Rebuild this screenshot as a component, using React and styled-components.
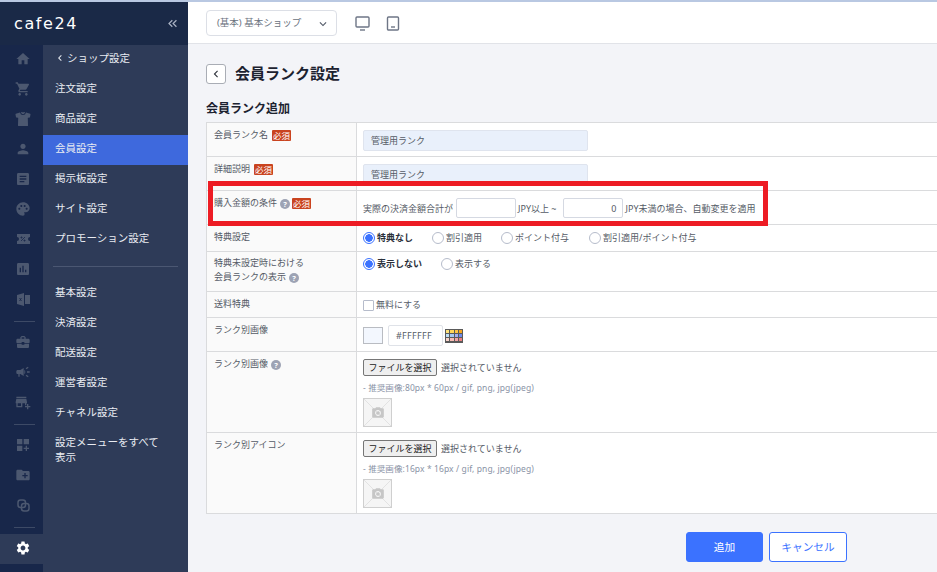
import React from 'react'
import styled, { createGlobalStyle } from 'styled-components'
import {
    MdHome, MdShoppingCart, MdPerson, MdArticle, MdPalette, MdAssessment, MdBusinessCenter,
    MdCampaign, MdAddBusiness, MdDashboardCustomize, MdCreateNewFolder, MdSettings,
    MdKeyboardDoubleArrowLeft, MdChevronLeft, MdKeyboardArrowDown, MdPhotoCamera,
} from 'react-icons/md'
import { IoShirt } from 'react-icons/io5'

const GlobalStyle = createGlobalStyle`
    html, body {
        margin: 0;
        height: 100%;
        overflow: hidden;
        font-family: "Noto Sans", "Noto Sans CJK JP", sans-serif;
    }
    * {
        box-sizing: border-box;
    }
`

const Page = styled.div`
    width: 937px;
    height: 572px;
    display: flex;
    border-top: 2px solid #b9c8e2;
    overflow: hidden;
`

const Sidebar = styled.aside`
    width: 188px;
    flex: none;
    display: flex;
    flex-direction: column;
    background: #18274a;
`

const LogoBar = styled.div`
    height: 43px;
    flex: none;
    display: flex;
    align-items: center;
    justify-content: space-between;
    padding: 0 8px 0 14px;
    background: #1a2947;
    color: #ffffff;
`

const Logo = styled.span`
    font-family: "DejaVu Sans", sans-serif;
    font-size: 16px;
    letter-spacing: 1.6px;
    line-height: 1;
`

const Collapse = styled.span`
    display: flex;
    color: #a9b1c2;
    font-size: 15px;
`

const SideBody = styled.div`
    flex: 1;
    display: flex;
`

const Rail = styled.nav`
    width: 43px;
    flex: none;
    display: flex;
    flex-direction: column;
    background: #18274a;
`

const RailItem = styled.div`
    height: 30px;
    display: flex;
    align-items: center;
    justify-content: center;
    padding: 0 0 2px 3px;
    font-size: 16px;
    color: ${p => (p.$active ? '#ffffff' : '#4c5870')};
    background: ${p => (p.$active ? '#2e3b58' : 'transparent')};
`

const RailDivider = styled.div`
    height: 1px;
    margin: 6px 8px 6px 14px;
    background: #3d4a66;
`

const Panel = styled.nav`
    flex: 1;
    background: #2e3b58;
`

const MenuItem = styled.div`
    min-height: 30px;
    display: flex;
    align-items: center;
    padding: ${p => (p.$multi ? '6px' : '0 7px 4px')} 12px;
    font-size: 10.5px;
    line-height: 15px;
    color: #e9ecf2;
    background: ${p => (p.$active ? '#3e69dd' : 'transparent')};
`

const BackMark = styled.span`
    display: flex;
    margin: 0 1px 0 -1px;
    font-size: 12px;
`

const MenuDivider = styled.div`
    height: 1px;
    margin: 11px 10px 12px;
    background: #4b5772;
`

const Main = styled.main`
    flex: 1;
    min-width: 0;
    display: flex;
    flex-direction: column;
    background: #f3f4f8;
`

const TopBar = styled.header`
    height: 42px;
    flex: none;
    display: flex;
    align-items: flex-start;
    padding: 8px 18px;
    background: #ffffff;
    border-bottom: 1px solid #e1e3e8;
`

const ShopSelect = styled.div`
    width: 131px;
    height: 26px;
    display: flex;
    align-items: center;
    justify-content: space-between;
    padding: 0 6px 3px 10px;
    border: 1px solid #dcdfe6;
    border-radius: 4px;
    font-size: 9.5px;
    color: #6b7280;
`

const Arrow = styled.span`
    display: flex;
    margin-top: 4px;
    font-size: 14px;
    color: #555c6a;
`

const DeviceIcon = styled.svg`
    margin: 6px 0 0 ${p => p.$gap}px;
    flex: none;
`

const Content = styled.div`
    flex: 1;
    min-height: 0;
    padding: 20px 0 0 18px;
    overflow: hidden;
    position: relative;
`

const TitleRow = styled.div`
    height: 20px;
    display: flex;
    align-items: center;
    gap: 9px;
`

const BackButton = styled.button`
    width: 20px;
    height: 20px;
    display: flex;
    align-items: center;
    justify-content: center;
    padding: 0;
    background: #ffffff;
    border: 1px solid #a9adb5;
    border-radius: 3px;
    color: #333840;
    font-size: 14px;
`

const Title = styled.h1`
    margin: 0 0 2px;
    font-size: 15px;
    line-height: 20px;
    font-weight: 700;
    color: #1c2230;
`

const SectionTitle = styled.h2`
    margin: 14px 0 6px;
    padding-top: 2px;
    height: 18px;
    font-size: 12px;
    line-height: 18px;
    font-weight: 700;
    color: #1c2230;
`

const FormTable = styled.div`
    width: 780px;
    border-top: 1px solid #dadbdd;
    border-left: 1px solid #dadbdd;
`

const Row = styled.div`
    height: ${p => p.$height}px;
    display: flex;
    border-bottom: 1px solid #dadbdd;
    background: #ffffff;
`

const LabelCell = styled.div`
    width: 150px;
    flex: none;
    padding: ${p => p.$top ?? 5}px 7px 0;
    background: #fafafa;
    border-right: 1px solid #dadbdd;
    font-size: 9px;
    line-height: 14px;
    color: #555b66;
`

const ValueCell = styled.div`
    flex: 1;
    padding: ${p => p.$top ?? 7}px 6px 0;
    font-size: 9px;
    line-height: 15px;
    color: #555b66;
`

const Line = styled.div`
    display: flex;
    align-items: center;
`

const Help = styled.span`
    display: inline-block;
    width: 10px;
    height: 10px;
    margin-left: 3px;
    border-radius: 50%;
    background: #9da3b4;
    color: #ffffff;
    font-size: 7.5px;
    line-height: 10px;
    font-weight: 700;
    text-align: center;
    vertical-align: middle;
`

const Required = styled.span`
    display: inline-block;
    margin-left: 4px;
    padding: 0 1px;
    height: 11px;
    line-height: 11px;
    background: #c9431f;
    border-radius: 1px;
    color: #ffffff;
    font-size: 8.5px;
    vertical-align: middle;

    ${Help} + & {
        margin-left: 2px;
    }
`

const FilledInput = styled.div`
    width: 225px;
    height: 21px;
    padding: 0 7px;
    display: flex;
    align-items: center;
    background: #e9f0fb;
    border: 1px solid #dfe4ee;
    border-radius: 2px;
`

const AmountInput = styled.div`
    width: 60px;
    height: 20px;
    margin: 0 ${p => p.$right ?? 2}px 0 ${p => p.$left ?? 3}px;
    padding: 0 5px;
    display: flex;
    align-items: center;
    justify-content: flex-end;
    background: #ffffff;
    border: 1px solid #d5d9e2;
    border-radius: 2px;
`

const Radio = styled.span`
    width: 12px;
    height: 12px;
    flex: none;
    margin-right: 2px;
    border: 1px solid ${p => (p.$on ? '#3b72ff' : '#b6bccb')};
    border-radius: 50%;
    background: ${p => (p.$on ? 'radial-gradient(circle, #3b72ff 0 3.5px, #ffffff 4px)' : '#ffffff')};
`

const RadioText = styled.span`
    margin-right: ${p => p.$gap}px;
    font-weight: ${p => (p.$on ? 700 : 400)};
    color: ${p => (p.$on ? '#2a2f3a' : '#555b66')};
`

const Check = styled.span`
    width: 11px;
    height: 11px;
    margin: 1px 2px 0 0;
    background: #ffffff;
    border: 1px solid #b6bccb;
    border-radius: 1px;
`

const Swatch = styled.span`
    width: 20px;
    height: 17px;
    margin-right: 5px;
    background: #f3f7fe;
    border: 1px solid #b9bcc2;
`

const ColorInput = styled.div`
    width: 55px;
    height: 21px;
    display: flex;
    align-items: center;
    padding-left: 7px;
    background: #ffffff;
    border: 1px solid #dfe2e8;
    border-radius: 2px;
    letter-spacing: 0.3px;
`

const Palette = styled.div`
    width: 18px;
    height: 14px;
    margin-left: 2px;
    display: grid;
    grid-template-columns: repeat(4, 1fr);
    grid-template-rows: repeat(3, 1fr);
    gap: 1px;
    padding: 1px;
    background: #5a5a5a;
`

const PaletteCell = styled.span`
    background: ${p => p.$color};
`

const FileButton = styled.button`
    width: 74px;
    height: 17px;
    margin-right: 4px;
    padding: 0;
    background: #efefef;
    border: 1px solid #767676;
    border-radius: 2px;
    font-family: inherit;
    font-size: 9px;
    color: #222222;
`

const Hint = styled.div`
    margin-top: 6px;
    font-size: 8.5px;
    line-height: 12px;
    letter-spacing: 0.1px;
    color: #8a93a6;
    white-space: nowrap;
`

const Placeholder = styled.div`
    width: 29px;
    height: 29px;
    margin-top: 4px;
    display: flex;
    align-items: center;
    justify-content: center;
    background: linear-gradient(45deg, transparent 49%, #e2e2e2 49% 51%, transparent 51%),
        linear-gradient(-45deg, transparent 49%, #e2e2e2 49% 51%, transparent 51%),
        #f5f5f5;
    border: 1px solid #cfcfcf;
    color: #c6c6c6;
    font-size: 14px;
`

const Actions = styled.div`
    display: flex;
    gap: 6px;
    margin: 18px 0 0 480px;
`

const ActionButton = styled.button`
    width: ${p => (p.$primary ? 77 : 78)}px;
    height: 30px;
    padding: 0 0 2px;
    background: ${p => (p.$primary ? '#3b72ff' : '#ffffff')};
    border: 1px solid #3b72ff;
    border-radius: 3px;
    color: ${p => (p.$primary ? '#ffffff' : '#3b72ff')};
    font-family: inherit;
    font-size: 10.7px;
`

const Highlight = styled.div`
    position: absolute;
    left: 20px;
    top: 137px;
    width: 560px;
    height: 45px;
    border: 5px solid #ed1c24;
    pointer-events: none;
`

function TicketIcon() {
    return (
        <svg width="13" height="10" viewBox="0 0 13 10" fill="currentColor">
            <path d="M0 0h13v3a2 2 0 0 0 0 4v3H0V7a2 2 0 0 0 0-4z" />
            <path d="M4 7l4-4M4 3h1v1H4zM7 6h1v1H7z" stroke="#18274a" strokeWidth=".8" fill="none" />
        </svg>
    )
}

function BookIcon() {
    return (
        <svg width="13" height="13" viewBox="0 0 13 13" fill="currentColor">
            <path d="M0 2l7-2v13l-7-2z" />
            <path d="M8 2h5v9H8z" />
            <path d="M2.5 5l2 3M4.5 5l-2 3" stroke="#18274a" strokeWidth=".8" fill="none" />
        </svg>
    )
}

function LinkIcon() {
    return (
        <svg width="13" height="13" viewBox="0 0 13 13" fill="none" stroke="currentColor" strokeWidth="1.5">
            <rect x="1" y="1" width="7.5" height="7.5" rx="2.5" />
            <rect x="4.5" y="4.5" width="7.5" height="7.5" rx="2.5" />
        </svg>
    )
}

const paletteColors = ['#ffe27a', '#ffd65a', '#ffc542', '#f5a623', '#bfe0f7', '#a5c8f2', '#a3adf2', '#6f8cec', '#f9d3ca', '#f7bcb4', '#f4a3a3', '#ee8080']

function FileField({ size }) {
    return (
        <>
            <Line>
                <FileButton>ファイルを選択</FileButton>
                選択されていません
            </Line>
            <Hint>- 推奨画像:{ size } / gif, png, jpg(jpeg)</Hint>
            <Placeholder><MdPhotoCamera /></Placeholder>
        </>
    )
}

function Nav() {
    const upper = ['注文設定', '商品設定', '会員設定', '掲示板設定', 'サイト設定', 'プロモーション設定']
    const lower = ['基本設定', '決済設定', '配送設定', '運営者設定', 'チャネル設定']
    return (
        <Sidebar>
            <LogoBar>
                <Logo>cafe24</Logo>
                <Collapse><MdKeyboardDoubleArrowLeft /></Collapse>
            </LogoBar>
            <SideBody>
                <Rail>
                    <RailItem><MdHome /></RailItem>
                    <RailItem><MdShoppingCart /></RailItem>
                    <RailItem><IoShirt /></RailItem>
                    <RailItem><MdPerson /></RailItem>
                    <RailItem><MdArticle /></RailItem>
                    <RailItem><MdPalette /></RailItem>
                    <RailItem><TicketIcon /></RailItem>
                    <RailItem><MdAssessment /></RailItem>
                    <RailItem><BookIcon /></RailItem>
                    <RailDivider />
                    <RailItem><MdBusinessCenter /></RailItem>
                    <RailItem><MdCampaign /></RailItem>
                    <RailItem><MdAddBusiness /></RailItem>
                    <RailDivider />
                    <RailItem><MdDashboardCustomize /></RailItem>
                    <RailItem><MdCreateNewFolder /></RailItem>
                    <RailItem><LinkIcon /></RailItem>
                    <RailDivider />
                    <RailItem $active><MdSettings /></RailItem>
                </Rail>
                <Panel>
                    <MenuItem><BackMark><MdChevronLeft /></BackMark>ショップ設定</MenuItem>
                    { upper.map(name => <MenuItem key={ name } $active={ name === '会員設定' }>{ name }</MenuItem>) }
                    <MenuDivider />
                    { lower.map(name => <MenuItem key={ name }>{ name }</MenuItem>) }
                    <MenuItem $multi>設定メニューをすべて<br />表示</MenuItem>
                </Panel>
            </SideBody>
        </Sidebar>
    )
}

export default function App() {
    return (
        <Page>
            <GlobalStyle />
            <Nav />
            <Main>
                <TopBar>
                    <ShopSelect>
                        (基本) 基本ショップ
                        <Arrow><MdKeyboardArrowDown /></Arrow>
                    </ShopSelect>
                    <DeviceIcon $gap={ 18 } width="15" height="15" viewBox="0 0 15 15" fill="none" stroke="#6e7686" strokeWidth="1.4">
                        <rect x="1" y="1" width="13" height="10" rx="1" />
                        <path d="M5 14h5" />
                    </DeviceIcon>
                    <DeviceIcon $gap={ 16 } width="14" height="15" viewBox="0 0 14 15" fill="none" stroke="#6e7686" strokeWidth="1.4">
                        <rect x="1.5" y="1" width="11" height="13" rx="1" />
                        <path d="M5 11h4" />
                    </DeviceIcon>
                </TopBar>
                <Content>
                    <TitleRow>
                        <BackButton><MdChevronLeft /></BackButton>
                        <Title>会員ランク設定</Title>
                    </TitleRow>
                    <SectionTitle>会員ランク追加</SectionTitle>
                    <FormTable>
                        <Row $height={ 34 }>
                            <LabelCell>会員ランク名<Required>必須</Required></LabelCell>
                            <ValueCell><FilledInput>管理用ランク</FilledInput></ValueCell>
                        </Row>
                        <Row $height={ 34 }>
                            <LabelCell>詳細説明<Required>必須</Required></LabelCell>
                            <ValueCell><FilledInput>管理用ランク</FilledInput></ValueCell>
                        </Row>
                        <Row $height={ 34 }>
                            <LabelCell>購入金額の条件<Help>?</Help><Required>必須</Required></LabelCell>
                            <ValueCell>
                                <Line>
                                    実際の決済金額合計が
                                    <AmountInput />
                                    JPY以上 ~
                                    <AmountInput $left={ 6 } $right={ 3 }>0</AmountInput>
                                    JPY未満の場合、自動変更を適用
                                </Line>
                            </ValueCell>
                        </Row>
                        <Row $height={ 27 }>
                            <LabelCell>特典設定</LabelCell>
                            <ValueCell $top={ 5 }>
                                <Line>
                                    <Radio $on /><RadioText $on $gap={ 19 }>特典なし</RadioText>
                                    <Radio /><RadioText $gap={ 19 }>割引適用</RadioText>
                                    <Radio /><RadioText $gap={ 20 }>ポイント付与</RadioText>
                                    <Radio /><RadioText>割引適用/ポイント付与</RadioText>
                                </Line>
                            </ValueCell>
                        </Row>
                        <Row $height={ 40 }>
                            <LabelCell $top={ 4 }>特典未設定時における<br />会員ランクの表示<Help>?</Help></LabelCell>
                            <ValueCell $top={ 4 }>
                                <Line>
                                    <Radio $on /><RadioText $on $gap={ 19 }>表示しない</RadioText>
                                    <Radio /><RadioText>表示する</RadioText>
                                </Line>
                            </ValueCell>
                        </Row>
                        <Row $height={ 26 }>
                            <LabelCell>送料特典</LabelCell>
                            <ValueCell $top={ 5 }>
                                <Line><Check />無料にする</Line>
                            </ValueCell>
                        </Row>
                        <Row $height={ 34 }>
                            <LabelCell>ランク別画像</LabelCell>
                            <ValueCell>
                                <Line>
                                    <Swatch />
                                    <ColorInput>#FFFFFF</ColorInput>
                                    <Palette>
                                        { paletteColors.map(color => <PaletteCell key={ color } $color={ color } />) }
                                    </Palette>
                                </Line>
                            </ValueCell>
                        </Row>
                        <Row $height={ 81 }>
                            <LabelCell>ランク別画像<Help>?</Help></LabelCell>
                            <ValueCell><FileField size="80px * 60px" /></ValueCell>
                        </Row>
                        <Row $height={ 81 }>
                            <LabelCell>ランク別アイコン</LabelCell>
                            <ValueCell><FileField size="16px * 16px" /></ValueCell>
                        </Row>
                    </FormTable>
                    <Actions>
                        <ActionButton $primary>追加</ActionButton>
                        <ActionButton>キャンセル</ActionButton>
                    </Actions>
                    <Highlight />
                </Content>
            </Main>
        </Page>
    )
}
